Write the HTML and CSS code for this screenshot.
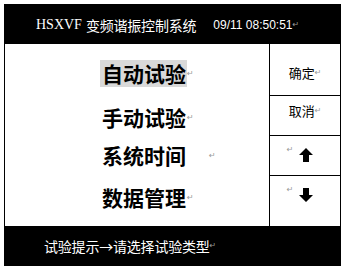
FILE: index.html
```html
<!DOCTYPE html>
<html>
<head>
    <title>HSXVF 变频谐振控制系统</title>
    <link rel="stylesheet" href="styles.css">
</head>
<body>

<div class="screen">
    <div class="header">
        <span class="brand">HSXVF</span>
        <span class="title">变频谐振控制系统</span>
        <span class="clock">09/11 08:50:51</span><span class="ret">&#8629;</span>
    </div>

    <div class="main">
        <ul class="menu">
            <li class="item item-1"><span class="label selected">自动试验</span><span class="ret">&#8629;</span></li>
            <li class="item item-2"><span class="label">手动试验</span><span class="ret">&#8629;</span></li>
            <li class="item item-3"><span class="label">系统时间</span><span class="ret ret-far">&#8629;</span></li>
            <li class="item item-4"><span class="label">数据管理</span><span class="ret">&#8629;</span></li>
        </ul>

        <div class="keys">
            <div class="key key-ok">确定<span class="ret">&#8629;</span></div>
            <div class="key key-cancel">取消<span class="ret">&#8629;</span></div>
            <div class="key key-up">
                <span class="ret">&#8629;</span>
                <svg width="14" height="14" viewBox="0 0 14 14"><path d="M7 0 L14 7 L10 7 L10 14 L4 14 L4 7 L0 7 Z" fill="#000"/></svg>
            </div>
            <div class="key key-down">
                <span class="ret">&#8629;</span>
                <svg width="14" height="14" viewBox="0 0 14 14"><path d="M4 0 L10 0 L10 7 L14 7 L7 14 L0 7 L4 7 Z" fill="#000"/></svg>
            </div>
        </div>
    </div>

    <div class="footer">
        试验提示→请选择试验类型<span class="ret">&#8629;</span>
    </div>
</div>

</body>
</html>
```

FILE: styles.css
```css
BODY {
    margin : 0;
    padding : 4px;
    background : #fff;
    font-family : "Noto Sans CJK SC", sans-serif;
}
.screen {
    width : 335px;
    height : 260px;
    border : 1px solid #000;
    display : flex;
    flex-direction : column;
}
.header {
    height : 39px;
    background : #000;
    color : #fff;
    display : flex;
    align-items : center;
    padding-left : 31px;
    font-size : 14px;
    line-height : 1;
}
.brand {
    font-family : "Liberation Serif", serif;
    font-size : 14px;
    margin-right : 4px;
}
.title {
    letter-spacing : -0.2px;
}
.clock {
    font-family : "Liberation Sans", sans-serif;
    font-size : 12px;
    margin-left : 17px;
}
.ret {
    font-family : "DejaVu Sans", sans-serif;
    font-size : 8px;
    color : #999;
    font-weight : normal;
}
.main {
    height : 182px;
    display : flex;
}
.menu {
    flex : 1;
    list-style : none;
    margin : 0;
    padding : 0;
    display : flex;
    flex-direction : column;
}
.item {
    padding-left : 95px;
    font-size : 21px;
    font-weight : bold;
    height : 27px;
    line-height : 27px;
    display : flex;
    align-items : center;
}
.item-1 {
    margin-top : 16px;
}
.item-2 {
    margin-top : 17px;
}
.item-3 {
    margin-top : 11px;
}
.item-4 {
    margin-top : 15px;
}
.label {
    padding : 0 1px 0 2px;
}
.selected {
    background : #d9d9d9;
}
.ret-far {
    margin-left : 22px;
}
.keys {
    width : 70px;
    border-left : 1px solid #000;
    display : grid;
    grid-template-rows : 51px 40px 40px 1fr;
}
.key {
    display : flex;
    justify-content : center;
    align-items : center;
    font-size : 13px;
}
.key-cancel, .key-up, .key-down {
    border-top : 1px solid #000;
}
.key-ok {
    padding-top : 5px;
}
.key-cancel {
    padding-bottom : 10px;
}
.key-up, .key-down {
    align-items : flex-start;
    padding-top : 12px;
    padding-right : 10px;
}
.key-up .ret, .key-down .ret {
    margin-right : 6px;
    margin-top : -3px;
}
.footer {
    height : 39px;
    background : #000;
    color : #fff;
    display : flex;
    align-items : center;
    padding-left : 39px;
    font-size : 14px;
    letter-spacing : -0.2px;
}
```
